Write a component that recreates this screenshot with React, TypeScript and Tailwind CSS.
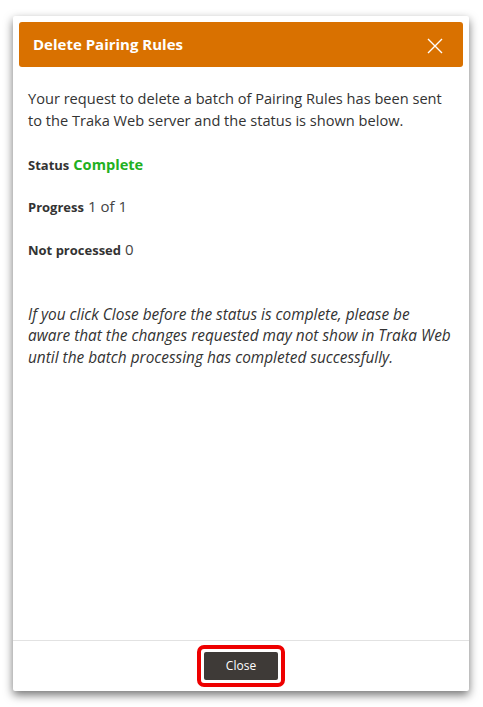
import React from "react";

export default function App() {
  return (
    <div className="w-[483px] h-[707px] bg-white pt-[16px] pl-[13px]" style={{ fontFamily: '"Open Sans", sans-serif' }}>
      <div className="w-[456px] h-[675px] bg-white flex flex-col shadow-[0_4px_10px_rgba(0,0,0,0.55)] rounded-[2px]">
        <div className="mx-[6px] mt-[6px] h-[45px] bg-[#d97100] rounded-[3px] flex items-center justify-between pl-[14px] pr-[20px]">
          <span className="text-white font-bold text-[15px]">Delete Pairing Rules</span>
          <svg width="16" height="16" viewBox="0 0 16 16" className="mt-[2px]">
            <path d="M1 1 L15 15 M15 1 L1 15" stroke="#ffffff" strokeWidth="1.4" fill="none" />
          </svg>
        </div>
        <div className="flex-1 px-[15px] pt-[20px] text-[#333333]">
          <p className="text-[14.6px] leading-[22px]">
            Your request to delete a batch of Pairing Rules has been sent to the Traka Web server and the status is shown below.
          </p>
          <div className="mt-[23px] flex items-baseline gap-[4px]">
            <span className="text-[13px] font-bold">Status</span>
            <span className="text-[14.6px] font-bold text-[#22b022]">Complete</span>
          </div>
          <div className="mt-[19px] flex items-baseline gap-[4px]">
            <span className="text-[13px] font-bold">Progress</span>
            <span className="text-[15px] text-[#444]">1 of 1</span>
          </div>
          <div className="mt-[21px] flex items-baseline gap-[4px]">
            <span className="text-[13px] font-bold">Not processed</span>
            <span className="text-[15px] text-[#444]">0</span>
          </div>
          <p className="mt-[43px] text-[15.4px] leading-[21.5px] italic">
            If you click Close before the status is complete, please be aware that the changes requested may not show in Traka Web until the batch processing has completed successfully.
          </p>
        </div>
        <div className="border-t border-[#e2e2e2] h-[51px] flex items-center justify-center">
          <div className="border-[4px] border-[#ee0000] rounded-[7px] p-[3px] bg-white">
            <button className="w-[74px] h-[28px] bg-[#3e3a37] text-white text-[12px] rounded-[2px]">Close</button>
          </div>
        </div>
      </div>
    </div>
  );
}
